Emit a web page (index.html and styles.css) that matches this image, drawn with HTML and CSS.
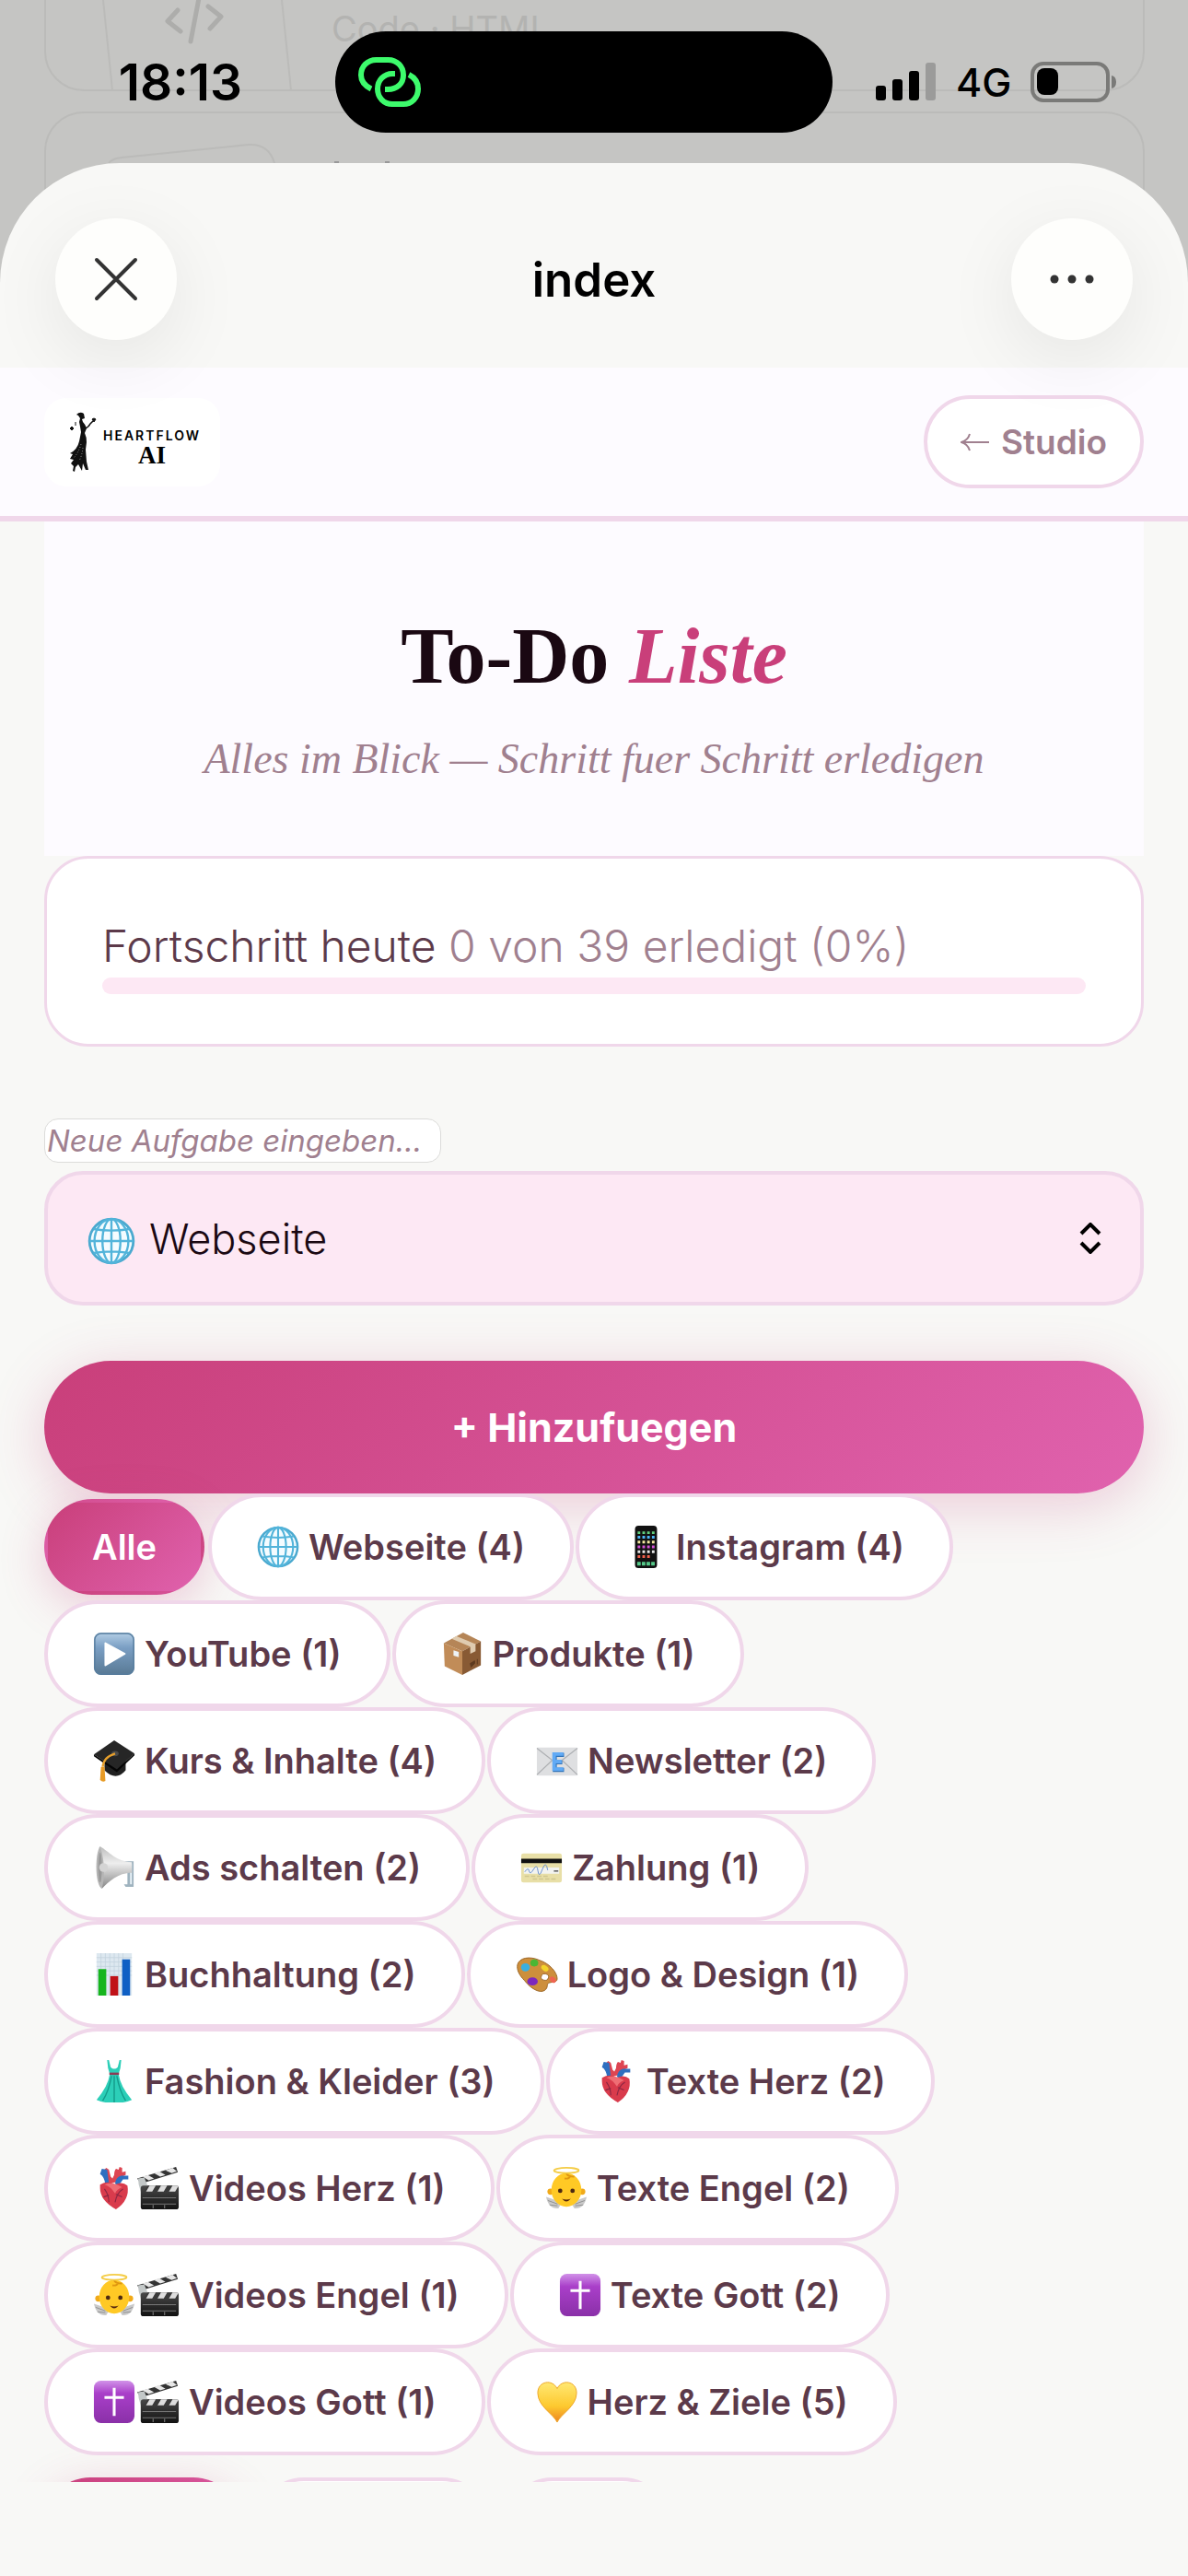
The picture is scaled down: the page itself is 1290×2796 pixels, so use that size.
FILE: index.html
```
<!DOCTYPE html>
<html lang="de">
<head>
  <meta charset="UTF-8">
  <meta name="viewport" content="width=device-width, initial-scale=1.0">
  <title>To-Do Liste</title>
  <link rel="stylesheet" href="styles.css">
</head>
<body>

  <!-- Icon set -->
  <svg class="sprite" aria-hidden="true">
    <defs>
      <linearGradient id="gPlay" x1="0" y1="0" x2="0" y2="1"><stop offset="0" stop-color="#b4cfe6"/><stop offset=".35" stop-color="#7b9fc4"/><stop offset="1" stop-color="#587994"/></linearGradient>
      <linearGradient id="gCross" x1="0" y1="0" x2="0" y2="1"><stop offset="0" stop-color="#d191e8"/><stop offset=".3" stop-color="#a93fc9"/><stop offset="1" stop-color="#8a30a8"/></linearGradient>
      <linearGradient id="gHorn" x1="0" y1="0" x2="0" y2="1"><stop offset="0" stop-color="#bdbdbd"/><stop offset=".4" stop-color="#eeeeee"/><stop offset="1" stop-color="#858585"/></linearGradient>
      <linearGradient id="gGold" x1="0" y1="0" x2="0" y2="1"><stop offset="0" stop-color="#ffe873"/><stop offset=".6" stop-color="#fdc92f"/><stop offset="1" stop-color="#ee8420"/></linearGradient>
      <linearGradient id="gClap" x1="0" y1="0" x2="0" y2="1"><stop offset="0" stop-color="#4a4a4a"/><stop offset="1" stop-color="#111"/></linearGradient>
    </defs>
    <symbol id="globe" viewBox="0 0 48 48">
      <circle cx="24" cy="24" r="22" fill="#f4fcff" stroke="#4aa9cf" stroke-width="2.6"/>
      <g fill="none" stroke="#52b4da" stroke-width="2.2"><ellipse cx="24" cy="24" rx="9" ry="22"/><ellipse cx="24" cy="24" rx="17" ry="22"/><path d="M24 2v44M2 24h44M6 12q18 3 36 0M6 36q18-3 36 0"/></g>
    </symbol>
    <symbol id="phone" viewBox="0 0 48 48">
      <rect x="12" y="0" width="25" height="48" rx="4" fill="#111"/>
      <g stroke-width="3" stroke-dasharray="3 2.400"><path d="M15 8h20" stroke="#61d07e"/><path d="M15 13h20" stroke="#4db5f5"/><path d="M15 18.500h20" stroke="#f4e9a0"/><path d="M15 24h20" stroke="#d653d8"/><path d="M15 29.500h20" stroke="#e6e6e6"/><path d="M15 35h15" stroke="#f2604c"/></g>
      <path d="M14.500 43h20" stroke="#54c989" stroke-width="4" stroke-dasharray="4 1.300"/>
    </symbol>
    <symbol id="play" viewBox="0 0 48 48">
      <rect x="1" y="0" width="46" height="48" rx="8" fill="url(#gPlay)"/><rect x="2" y="1" width="44" height="46" rx="7" fill="none" stroke="#587e9f" stroke-width="1.500"/><path d="M14 12v25l22-13z" fill="#fff" stroke="#fff" stroke-width="2" stroke-linejoin="round"/>
    </symbol>
    <symbol id="box" viewBox="0 0 48 48">
      <path d="M3 12 25 0l20 10-21 11z" fill="#b58557"/><path d="M3 12l21 9v27L4 38z" fill="#c18c58"/><path d="M24 21 45 10v27L24 48z" fill="#885a34"/><path d="M12 7 17 4l22 9v8l-6 3v-8z" fill="#dfcbb0"/><path d="M14 20l6 2v6l-6-2z" fill="#eef2f5"/><path d="M33 35l5-3v3l-4 4zM41 30v6" fill="#5e3b20" stroke="#5e3b20"/>
    </symbol>
    <symbol id="cap" viewBox="0 0 48 48">
      <path d="M13 21v14q13 13 24 0V21z" fill="#202020"/><path d="M1 17 24 1l23 15-20 18z" fill="#262626"/><path d="M1 17l26 17 20-18v2L27 37 1 19z" fill="#050505"/><ellipse cx="25" cy="16" rx="4" ry="3" fill="#4b4b4b"/><path d="M25 16Q12 20 11 31" fill="none" stroke="#e7a02c" stroke-width="2.400"/><path d="M9 31h4l1 16q-3 2-6-1z" fill="#e79a24"/>
    </symbol>
    <symbol id="mail" viewBox="0 0 48 48">
      <rect x="1" y="9" width="46" height="32" rx="1.500" fill="#dedfe1"/><path d="M1 10l23 18 23-18M1 40l17-16M47 40 30 24" fill="none" stroke="#aeb0b3" stroke-width="1.300"/><path d="M31 16.500H20.500v17H31M20.500 25H29" fill="none" stroke="#2f74bb" stroke-width="4.600" transform="translate(.8 1)"/><path d="M31 16.500H20.500v17H31M20.500 25H29" fill="none" stroke="#61aaf5" stroke-width="4"/>
    </symbol>
    <symbol id="horn" viewBox="0 0 48 48">
      <path d="M35 17h11v29h-9l-2-3h4V24h-4z" fill="#9fb3bf"/><path d="M43 20v23" stroke="#e9f3f8" stroke-width="2"/><path d="M8 0c10 6 18 17 36 18v12c-16 0-26 10-34 18z" fill="url(#gHorn)"/><path d="M8 0c5 14 6 34 2 48C2 44 2 8 8 0z" fill="#b5b5b5"/><ellipse cx="8" cy="24" rx="2" ry="17" fill="#999"/><circle cx="12" cy="24" r="5" fill="#d4d4d4"/>
    </symbol>
    <symbol id="card" viewBox="0 0 48 48">
      <rect x="1" y="8" width="46" height="33" rx="2.500" fill="#e8dfa7"/><path d="M1 14h46v5H1z" fill="#111"/><path d="M4 24h40v7H4z" fill="#f3f4f0"/><path d="M5 29q4-6 5-1t5-2 5 2 5-2 6 1" fill="none" stroke="#6a8fd0"/><path d="M38 28h5" stroke="#555" stroke-width="1.500"/><path d="M5 34h28M14 37h28" stroke="#cfc691" stroke-width="1.500" stroke-dasharray="5 2"/>
    </symbol>
    <symbol id="chart" viewBox="0 0 48 48">
      <rect x="4" y="0" width="40" height="48" fill="#dde8f0"/><path d="M9 0v48M14 0v48M19 0v48M24 0v48M29 0v48M34 0v48M4 5h40M4 10h40M4 15h40M4 20h40M4 25h40" stroke="#c1d1dd" stroke-width=".8"/><path d="M6 18h9v30H6z" fill="#16b51d"/><path d="M19.500 26h9v22h-9z" fill="#c01218"/><path d="M33 7h9v41h-9z" fill="#0f5fc4"/>
    </symbol>
    <symbol id="palette" viewBox="0 0 48 48">
      <path fill-rule="evenodd" d="M2 13C4 5 16 3 27 8c12 4 20 14 20 21 0 5-7 3-10 5-2 1 0 5-4 8-6 4-16-2-23-11C4 25 1 19 2 13zm27 13a4 3.500 0 1 0 8 2 4 3.500 0 1 0-8-2z" fill="#cd8f3c" stroke="#9a6426"/><ellipse cx="11" cy="16" rx="5" ry="4.500" fill="#3aafe0"/><ellipse cx="21" cy="11" rx="4.500" ry="4" fill="#49b634"/><ellipse cx="33" cy="17" rx="4.500" ry="3" fill="#f3d32c" transform="rotate(35 33 17)"/><ellipse cx="42" cy="30" rx="4" ry="3" fill="#ee6551" transform="rotate(45 42 30)"/><ellipse cx="19" cy="32" rx="6" ry="4.500" fill="#7c28bd"/>
    </symbol>
    <symbol id="dress" viewBox="0 0 48 48">
      <path d="M18 0l2 8q4 4 8 0l2-8h2l-1 9-2 7q2 14 15 29-20 8-40 0 13-15 15-29l-2-7-1-9z" fill="#2ccfb8"/><path d="M18.500 15.500h11" stroke="#8c3c55" stroke-width="2.600"/><path d="M21 18q-3 17-10 28M24 18v30M27 18q3 17 10 28" fill="none" stroke="#149b8b" stroke-width="1.500"/>
    </symbol>
    <symbol id="heart" viewBox="0 0 48 48">
      <path d="M15 20 14 9l-2-5 3-3 3 2 2 8 2 2 2-4q0-5 2-7l3 1 1-3 3 1v5l4-1v4l-4 2-2 5z" fill="#dd4552"/><path d="M14 20Q13 11 8 8l2-6 6 1 2 15zM25 19q1-8 7-9h8v4h-6l-5 7z" fill="#2e6fc0"/><path d="M8 20q9-5 17 0 8-4 14 1 3 16-13 27Q8 38 8 24z" fill="#d93b4c"/><path d="M13 20q9-4 20 3-6 2-8 7-5-8-12-10z" fill="#ef6d74"/><path d="M13 25q5 7 5 15M34 25q-7 4-9 15M26 31l7 3M18 32l-6 2" stroke="#8b2742" stroke-width="1.200" fill="none"/>
    </symbol>
    <symbol id="clapper" viewBox="0 0 48 48">
      <path d="M0 13 44 0l2 6L4 19z" fill="#333"/><path d="M6 11l7 4 6-2-7-4zM19 7l7 4 6-2-7-4zM32 4l7 3 6-2-5-4z" fill="#e7e7e7"/><path d="M1 13l7-1 4 10-8 6q-3-8-3-15z" fill="#c3c8c8"/><rect x="4" y="21" width="43" height="27" rx="3" fill="url(#gClap)"/><path d="M12 21h34v7H8z" fill="#3a3a3a"/><path d="M14 21h7l-4 7h-7zM27 21h7l-4 7h-7zM40 21h7l-4 7h-7z" fill="#dedede"/><path d="M6 35h38M6 42h38M18 43v4M31 43v4" stroke="#777" stroke-width="1.200"/>
    </symbol>
    <symbol id="angel" viewBox="0 0 48 48">
      <path d="M1 34q3 14 14 13l4-7zM47 34q-3 14-14 13l-4-7z" fill="#c9c9c9"/><path d="M3 38l11 4M5 43l9 1M45 38l-11 4M43 43l-9 1" stroke="#909090"/><circle cx="6" cy="28" r="3.500" fill="#f1aa19"/><circle cx="42" cy="28" r="3.500" fill="#f1aa19"/><ellipse cx="24" cy="26" rx="17" ry="19" fill="#ffc925"/><path d="M22 13q6 1 6-3M24 7q1 4 9 4" fill="none" stroke="#df9610" stroke-width="2"/><ellipse cx="24" cy="4" rx="14" ry="3" fill="none" stroke="#f4cc45" stroke-width="1.800"/><circle cx="17" cy="27" r="2.500" fill="#4d2a12"/><circle cx="31" cy="27" r="2.500" fill="#4d2a12"/><path d="M19 36q5 2 10 0-5 6-10 0z" fill="#54250d"/>
    </symbol>
    <symbol id="cross" viewBox="0 0 48 48">
      <rect x="1" y="0" width="46" height="48" rx="8" fill="url(#gCross)"/><path d="M24 8v32M13 19h22" stroke="#fff" stroke-width="3.200"/>
    </symbol>
    <symbol id="goldheart" viewBox="0 0 48 48">
      <path d="M24 47C20 38 2 29 2 14 2 0 19-2 24 9c5-11 22-9 22 5 0 15-18 24-22 33z" fill="url(#gGold)" stroke="#eda62a"/>
    </symbol>
  </svg>

  <div class="screen">
    <!-- File list behind the sheet -->
    <svg class="backdrop" viewBox="0 0 1290 240" aria-hidden="true">
      <g fill="none" stroke="#bbbbb9" stroke-width="2"><rect x="49" y="-90" width="1193" height="188" rx="42"/><rect x="49" y="122" width="1193" height="220" rx="42"/><path d="M112 0l10 98M306 0l10 98M118 177q4-5 14-6l138-14q22-1 28 20"/></g>
      <path d="M193 11l-11 12 14 11M216-2l-9 47M226 7l14 11-12 13" fill="none" stroke="#adadab" stroke-width="5" stroke-linecap="round" stroke-linejoin="round"/>
      <text class="backdrop-text" x="360" y="45">Code · HTML</text>
      <path d="M363 175h5v3h-5zM418 175h5v3h-5z" fill="#999"/>
    </svg>

    <div class="statusbar">
      <time class="clock">18:13</time>
      <div class="island">
        <svg width="68" height="54" viewBox="0 0 68 54" aria-hidden="true">
          <g fill="none" stroke="#3dfb6c" stroke-width="6"><path d="M14 34.500C7 31 3 26 3 19.500 3 10 10 3 19.500 3h13C42 3 49 10 49 19.500S42 35 32 35h-3"/><path d="M40 18h-3c-9 0-16 7-16 16.500S28 51 37 51h12c9 0 16-7 16-16.500C65 27 61 22 55 19"/></g>
        </svg>
      </div>
      <div class="signals">
        <svg width="66" height="42" viewBox="0 0 66 42" aria-hidden="true"><rect y="25" width="11" height="16" rx="3"/><rect x="18" y="18" width="11" height="23" rx="3"/><rect x="36" y="9" width="11" height="32" rx="3"/><rect x="54" width="11" height="41" rx="3" fill="#9b9b9a"/></svg>
        <span>4G</span>
        <svg width="94" height="44" viewBox="0 0 94 44" aria-hidden="true"><rect x="2" y="2" width="82" height="40" rx="12" fill="none" stroke="#7a7a78" stroke-width="4"/><path d="M88 15q5 1 5 7t-5 7z" fill="#7a7a78"/><rect x="7" y="7" width="23" height="29" rx="8"/></svg>
      </div>
    </div>

    <div class="sheet">
      <div class="sheet-header">
        <button class="round-btn" type="button" aria-label="Schließen">
          <svg width="48" height="48" viewBox="0 0 48 48"><path d="M3 3l42 42M45 3L3 45" stroke="#333" stroke-width="4" stroke-linecap="round"/></svg>
        </button>
        <span class="sheet-title">index</span>
        <button class="round-btn" type="button" aria-label="Mehr">
          <svg width="48" height="10" viewBox="0 0 48 10" fill="#333"><circle cx="5" cy="5" r="4.500"/><circle cx="24" cy="5" r="4.500"/><circle cx="43" cy="5" r="4.500"/></svg>
        </button>
      </div>

      <div class="webview">
        <nav class="topnav">
          <div class="logo">
            <svg width="191" height="96" viewBox="0 0 191 96" role="img" aria-label="Heartflow AI">
              <path d="M35 18q4-4 8-1l1 5-3 1 1 3q3 3 4 7l-2 5q2 4 2 10l-1 8 1 13 2 9h-3l-3-7-1 8-4-7-3 3-1 5-2-1 1-5-3-3 3-4-4-1 3-5-3-1q8-4 10-13l2-10-1-6-1-5 1-4-2-3z" fill="#111"/>
              <path d="M44 33q4-1 6-5l3-3" fill="none" stroke="#111" stroke-width="1.500"/>
              <path d="M52 23l2-1 2 1-2 3zM28 33l2-2 2 2-2 2zM34 26v4" fill="#111" stroke="#111"/>
              <path d="M40 50q-3 10-8 15M42 54q-1 9-4 14" fill="none" stroke="#999" stroke-dasharray="1 2"/>
              <text class="logo-name" x="64" y="46">HEARTFLOW</text>
              <text class="logo-ai" x="102" y="71">AI</text>
            </svg>
          </div>
          <a class="back-link" href="#studio">
            <svg width="32" height="20" viewBox="0 0 32 20" aria-hidden="true"><path d="M31 10H2M10 1q-2 7-9 9 7 2 9 9" fill="none" stroke="currentColor" stroke-width="2"/></svg>
            Studio
          </a>
        </nav>

        <main class="container">
          <header class="hero">
            <h1>To-Do <em>Liste</em></h1>
            <p>Alles im Blick — Schritt fuer Schritt erledigen</p>
          </header>

          <section class="progress-card">
            <span class="progress-label">Fortschritt heute</span>
            <span class="progress-count">0 von 39 erledigt (0%)</span>
            <div class="progress-bar"></div>
          </section>

          <form class="add-form">
            <input class="task-input" type="text" placeholder="Neue Aufgabe eingeben..." aria-label="Neue Aufgabe">
            <div class="select-wrap">
              <select aria-label="Kategorie"><option>Webseite</option></select>
              <svg class="select-icon"><use href="#globe"/></svg>
              <svg class="select-arrows" viewBox="0 0 24 34"><path d="M2 12L12 2l10 10M2 22l10 10 10-10" fill="none" stroke="#000" stroke-width="4"/></svg>
            </div>
            <button class="add-btn" type="button">+ Hinzufuegen</button>
          </form>

          <div class="filters">
            <button class="chip active" type="button">Alle</button>
            <button class="chip" type="button"><svg><use href="#globe"/></svg><span>Webseite (4)</span></button>
            <button class="chip" type="button"><svg><use href="#phone"/></svg><span>Instagram (4)</span></button>
            <button class="chip" type="button"><svg><use href="#play"/></svg><span>YouTube (1)</span></button>
            <button class="chip" type="button"><svg><use href="#box"/></svg><span>Produkte (1)</span></button>
            <button class="chip" type="button"><svg><use href="#cap"/></svg><span>Kurs &amp; Inhalte (4)</span></button>
            <button class="chip" type="button"><svg><use href="#mail"/></svg><span>Newsletter (2)</span></button>
            <button class="chip" type="button"><svg><use href="#horn"/></svg><span>Ads schalten (2)</span></button>
            <button class="chip" type="button"><svg><use href="#card"/></svg><span>Zahlung (1)</span></button>
            <button class="chip" type="button"><svg><use href="#chart"/></svg><span>Buchhaltung (2)</span></button>
            <button class="chip" type="button"><svg><use href="#palette"/></svg><span>Logo &amp; Design (1)</span></button>
            <button class="chip" type="button"><svg><use href="#dress"/></svg><span>Fashion &amp; Kleider (3)</span></button>
            <button class="chip" type="button"><svg><use href="#heart"/></svg><span>Texte Herz (2)</span></button>
            <button class="chip" type="button"><svg><use href="#heart"/></svg><svg><use href="#clapper"/></svg><span>Videos Herz (1)</span></button>
            <button class="chip" type="button"><svg><use href="#angel"/></svg><span>Texte Engel (2)</span></button>
            <button class="chip" type="button"><svg><use href="#angel"/></svg><svg><use href="#clapper"/></svg><span>Videos Engel (1)</span></button>
            <button class="chip" type="button"><svg><use href="#cross"/></svg><span>Texte Gott (2)</span></button>
            <button class="chip" type="button"><svg><use href="#cross"/></svg><svg><use href="#clapper"/></svg><span>Videos Gott (1)</span></button>
            <button class="chip" type="button"><svg><use href="#goldheart"/></svg><span>Herz &amp; Ziele (5)</span></button>
          </div>

          <div class="tabs" aria-hidden="true">
            <span class="tab active"></span>
            <span class="tab wide"></span>
            <span class="tab"></span>
          </div>
        </main>
      </div>
    </div>
  </div>

</body>
</html>
```
FILE: styles.css
```
* {
  box-sizing: border-box;
}
body {
  margin: 0;
  background: #c5c5c3;
  font-family: Inter, "Liberation Sans", sans-serif;
  color: #1a0812;
}
button, input, select {
  font-family: inherit;
  margin: 0;
}
.sprite {
  position: absolute;
  width: 0;
  height: 0;
}
.screen {
  position: relative;
  display: flex;
  flex-direction: column;
  height: 100vh;
  overflow: hidden;
}

/* Status bar */
.backdrop {
  position: absolute;
  top: 0;
  left: 0;
  width: 100%;
}
.backdrop-text {
  font-size: 38px;
  fill: #b3b3b1;
}
.statusbar {
  position: relative;
  display: grid;
  grid-template-columns: 364fr 540px 386fr;
  align-items: center;
  height: 177px;
  flex: none;
}
.clock {
  padding-left: 28px;
  text-align: center;
  font-size: 55px;
  font-weight: 600;
  color: #000;
}
.island {
  display: flex;
  align-items: center;
  height: 110px;
  padding-left: 25px;
  border-radius: 55px;
  background: #000;
}
.signals {
  display: flex;
  align-items: center;
  gap: 21px;
  padding-left: 47px;
  font-size: 43px;
  font-weight: 500;
  color: #000;
}

/* Sheet */
.sheet {
  position: relative;
  display: flex;
  flex-direction: column;
  flex: 1;
  min-height: 0;
  padding-bottom: 102px;
  border-radius: 130px 130px 0 0;
  overflow: hidden;
  background: #f8f8f6;
}
.sheet-header {
  position: relative;
  z-index: 1;
  display: flex;
  justify-content: space-between;
  align-items: center;
  padding: 60px 60px 30px;
}
.sheet-title {
  font-size: 51px;
  font-weight: 600;
  color: #000;
}
.round-btn {
  display: flex;
  align-items: center;
  justify-content: center;
  width: 132px;
  height: 132px;
  padding: 0;
  border: 0;
  border-radius: 50%;
  background: #fefefc;
  box-shadow: 0 20px 80px rgba(0, 0, 0, 0.08);
}
.webview {
  flex: 1;
  min-height: 0;
  overflow: hidden;
}

/* Navigation */
.topnav {
  display: flex;
  justify-content: space-between;
  align-items: center;
  padding: 30px 48px;
  border-bottom: 6px solid #f0d7ea;
  background: #fdfbff;
}
.logo {
  height: 96px;
  border-radius: 24px;
  background: #fff;
}
.logo-name {
  font-size: 14px;
  font-weight: 600;
  letter-spacing: 2px;
}
.logo-ai {
  font-family: "Liberation Serif", serif;
  font-size: 27px;
  font-weight: 700;
}
.back-link {
  display: flex;
  align-items: center;
  gap: 12px;
  height: 101px;
  padding: 0 36px;
  border: 4px solid #f0d7ea;
  border-radius: 51px;
  background: #fff;
  color: #a0808f;
  font-size: 37px;
  font-weight: 600;
  text-decoration: none;
}

.container {
  padding: 0 48px;
}
.hero {
  padding: 90px 48px 73px;
  background: #fdfbff;
  font-family: "Liberation Serif", serif;
  text-align: center;
}
.hero h1 {
  margin: 0 0 24px;
  font-size: 86px;
  line-height: 112px;
}
.hero em {
  color: #c93f7a;
}
.hero p {
  margin: 0;
  font-size: 46px;
  line-height: 64px;
  font-style: italic;
  color: #a0808f;
}

/* Progress */
.progress-card {
  margin-bottom: 78px;
  padding: 60px 60px 54px;
  border: 3px solid #f0d7ea;
  border-radius: 48px;
  background: #fff;
  font-size: 48px;
  line-height: 69px;
  font-weight: 300;
}
.progress-label {
  color: #5c3a4a;
}
.progress-count {
  color: #a0808f;
}
.progress-bar {
  height: 18px;
  border-radius: 9px;
  background: #fde8f4;
}

/* New task */
.task-input {
  display: block;
  width: 431px;
  height: 48px;
  margin-bottom: 9px;
  padding: 0 2px;
  border: 1px solid #dcdcda;
  border-radius: 15px;
  background: #fff;
  font-size: 33px;
}
.task-input::placeholder {
  color: #a0808f;
  font-style: italic;
  opacity: 1;
}
.select-wrap {
  position: relative;
  margin-bottom: 60px;
}
.select-wrap select {
  display: block;
  width: 100%;
  height: 146px;
  padding: 0 110px;
  border: 4px solid #f0d7ea;
  border-radius: 42px;
  background: #fde8f4;
  color: #1a0812;
  font-size: 45px;
  font-weight: 300;
  appearance: none;
}
.select-icon {
  position: absolute;
  left: 47px;
  top: 50px;
  width: 52px;
  height: 52px;
}
.select-arrows {
  position: absolute;
  right: 46px;
  top: 56px;
  width: 24px;
  height: 34px;
}
.add-btn {
  display: block;
  width: 100%;
  height: 144px;
  border: 0;
  border-radius: 72px;
  background: linear-gradient(135deg, #c93f7a, #e062ae);
  box-shadow: 0 12px 60px rgba(201, 63, 122, 0.25);
  color: #fff;
  font-size: 43px;
  font-weight: 700;
}

/* Category filters */
.filters {
  display: flex;
  flex-wrap: wrap;
  align-items: center;
  column-gap: 2px;
  margin-bottom: 24px;
}
.chip {
  position: relative;
  display: flex;
  align-items: center;
  padding: 30px 49px;
  border: 4px solid #f0d7ea;
  border-radius: 58px;
  background: #fff;
  color: #5c3a4a;
  font-size: 38px;
  line-height: 48px;
  font-weight: 600;
  white-space: nowrap;
}
.chip svg {
  width: 46px;
  height: 46px;
  margin-right: 2px;
}
.chip span {
  padding-left: 8px;
}
.chip.active {
  margin-right: 2px;
  padding: 24px 48px;
  border-color: transparent;
  background: linear-gradient(135deg, #c93f7a, #e062ae);
  box-shadow: 0 12px 48px rgba(201, 63, 122, 0.25);
  color: #fff;
}

.tabs {
  display: flex;
  gap: 20px;
}
.tab {
  width: 176px;
  height: 100px;
  border: 4px solid #f0d7ea;
  border-radius: 50px;
  background: #fff;
}
.tab.wide {
  width: 250px;
}
.tab.active {
  width: 212px;
  border: 0;
  background: linear-gradient(135deg, #c93f7a, #e062ae);
  box-shadow: 0 12px 48px rgba(201, 63, 122, 0.25);
}
```
